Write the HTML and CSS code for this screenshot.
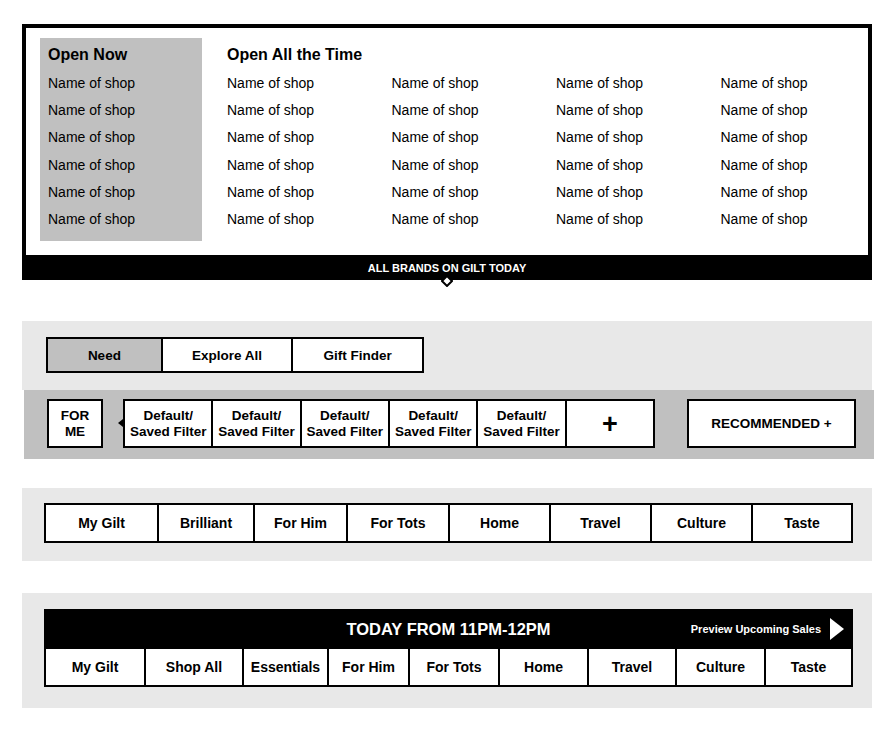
FILE: index.html
```html
<!DOCTYPE html>
<html lang="en">
  <head>
    <meta charset="UTF-8" />
    <meta name="viewport" content="width=device-width, initial-scale=1.0" />
    <title>Gilt Navigation</title>
    <link rel="stylesheet" href="styles.css">
  </head>
  <body>
    <div class="page">
      <!-- Brands dropdown -->
      <div class="brands">
        <div class="brands-body">
          <div class="open-now">
            <h2 class="list-title">Open Now</h2>
            <ul class="shop-list">
              <li>Name of shop</li>
              <li>Name of shop</li>
              <li>Name of shop</li>
              <li>Name of shop</li>
              <li>Name of shop</li>
              <li>Name of shop</li>
            </ul>
          </div>
          <div class="open-always">
            <h2 class="list-title">Open All the Time</h2>
            <ul class="shop-grid">
              <li>Name of shop</li><li>Name of shop</li><li>Name of shop</li><li>Name of shop</li>
              <li>Name of shop</li><li>Name of shop</li><li>Name of shop</li><li>Name of shop</li>
              <li>Name of shop</li><li>Name of shop</li><li>Name of shop</li><li>Name of shop</li>
              <li>Name of shop</li><li>Name of shop</li><li>Name of shop</li><li>Name of shop</li>
              <li>Name of shop</li><li>Name of shop</li><li>Name of shop</li><li>Name of shop</li>
              <li>Name of shop</li><li>Name of shop</li><li>Name of shop</li><li>Name of shop</li>
            </ul>
          </div>
        </div>
        <div class="brands-bar">
          ALL BRANDS ON GILT TODAY
          <svg class="bar-pointer" width="12" height="12" viewBox="0 0 12 12">
            <polygon points="6,1 11,6 6,11 1,6" fill="#fff" stroke="#000" stroke-width="2" />
          </svg>
        </div>
      </div>

      <!-- Need / Explore / Gift Finder -->
      <div class="panel panel-tabs">
        <div class="tabs">
          <div class="tab active">Need</div>
          <div class="tab">Explore All</div>
          <div class="tab">Gift Finder</div>
        </div>
      </div>
      <div class="filter-band">
        <div class="box for-me">FOR<br>ME</div>
        <div class="filters">
          <div class="filter">Default/<br>Saved Filter</div>
          <div class="filter">Default/<br>Saved Filter</div>
          <div class="filter">Default/<br>Saved Filter</div>
          <div class="filter">Default/<br>Saved Filter</div>
          <div class="filter">Default/<br>Saved Filter</div>
          <div class="filter plus">+</div>
        </div>
        <div class="box recommended">RECOMMENDED +</div>
      </div>

      <!-- Category nav -->
      <div class="panel panel-nav">
        <div class="nav nav-short">
          <div class="nav-item">My Gilt</div>
          <div class="nav-item">Brilliant</div>
          <div class="nav-item">For Him</div>
          <div class="nav-item">For Tots</div>
          <div class="nav-item">Home</div>
          <div class="nav-item">Travel</div>
          <div class="nav-item">Culture</div>
          <div class="nav-item">Taste</div>
        </div>
      </div>

      <!-- Today's sales nav -->
      <div class="panel panel-today">
        <div class="today-bar">
          <span></span>
          <span class="today-title">TODAY FROM 11PM-12PM</span>
          <a class="preview" href="#">
            Preview Upcoming Sales
            <svg width="14" height="22" viewBox="0 0 14 22">
              <polygon points="0,0 14,11 0,22" fill="#fff" />
            </svg>
          </a>
        </div>
        <div class="nav nav-long">
          <div class="nav-item">My Gilt</div>
          <div class="nav-item">Shop All</div>
          <div class="nav-item">Essentials</div>
          <div class="nav-item">For Him</div>
          <div class="nav-item">For Tots</div>
          <div class="nav-item">Home</div>
          <div class="nav-item">Travel</div>
          <div class="nav-item">Culture</div>
          <div class="nav-item">Taste</div>
        </div>
      </div>
    </div>
  </body>
</html>
```

FILE: styles.css
```css
body {
  margin: 0;
  padding: 0;
  background-color: #fff;
  font-family: "Liberation Sans", Arial, sans-serif;
  color: #000;
}

.page {
  width: 850px;
  padding: 24px 0 40px 22px;
}

/* brands dropdown */

.brands {
  border: 4px solid #000;
  border-bottom: 0;
}

.brands-body {
  display: flex;
  padding: 10px 0 14px 14px;
}

.list-title {
  margin: 0 0 2px;
  font-size: 16px;
  font-weight: bold;
  line-height: 26px;
}

.shop-list,
.shop-grid {
  list-style: none;
  margin: 0;
  padding: 0;
  font-size: 14px;
  line-height: 27.2px;
}

.open-now {
  flex-shrink: 0;
  width: 146px;
  padding: 4px 8px 8px;
  background-color: #c0c0c0;
}

.open-always {
  flex: 1;
  margin-left: 25px;
  padding-top: 4px;
}

.shop-grid {
  display: grid;
  grid-template-columns: repeat(3, 164.5px) 1fr;
}

.brands-bar {
  position: relative;
  height: 25px;
  background-color: #000;
  color: #fff;
  font-size: 11px;
  font-weight: bold;
  display: flex;
  justify-content: center;
  align-items: center;
}

.bar-pointer {
  position: absolute;
  left: 415px;
  bottom: -7px;
}

/* grey panels */

.panel {
  background-color: #e8e8e8;
}

.panel-tabs {
  margin-top: 41px;
  padding: 16px 24px 17px;
}

.tabs {
  display: flex;
  width: 378px;
  height: 36px;
  border: 2px solid #000;
  box-sizing: border-box;
}

.tab {
  display: flex;
  align-items: center;
  justify-content: center;
  font-size: 13.5px;
  font-weight: bold;
  background-color: #fff;
  border-left: 2px solid #000;
}

.tab:nth-child(1) {
  width: 114px;
  border-left: 0;
}

.tab:nth-child(2) {
  width: 130px;
}

.tab:nth-child(3) {
  width: 130px;
}

.tab.active {
  background-color: #c0c0c0;
}

/* filter band */

.filter-band {
  display: flex;
  margin: 0 -2px 0 2px;
  padding: 9px 0 11px 23px;
  background-color: #c0c0c0;
}

.box {
  height: 49px;
  box-sizing: border-box;
  border: 2px solid #000;
  background-color: #fff;
  display: flex;
  align-items: center;
  justify-content: center;
  text-align: center;
  font-size: 13.5px;
  font-weight: bold;
  line-height: 16px;
}

.for-me {
  width: 56px;
}

.filters {
  position: relative;
  display: flex;
  width: 532px;
  height: 49px;
  margin-left: 20px;
  box-sizing: border-box;
  border: 2px solid #000;
  background-color: #fff;
}

.filters::before {
  content: "";
  position: absolute;
  left: -7px;
  top: 18px;
  border-top: 4.5px solid transparent;
  border-bottom: 4.5px solid transparent;
  border-right: 5px solid #000;
}

.filter {
  flex: 1;
  display: flex;
  align-items: center;
  justify-content: center;
  text-align: center;
  font-size: 13.5px;
  font-weight: bold;
  line-height: 16px;
  border-left: 2px solid #000;
}

.filter:first-child {
  border-left: 0;
}

.filter.plus {
  font-size: 27px;
}

.recommended {
  width: 169px;
  margin-left: 32px;
}

/* nav rows */

.panel-nav {
  margin-top: 29px;
  padding: 15px 19px 18px 22px;
}

.nav {
  display: grid;
  border: 2px solid #000;
  background-color: #fff;
}

.nav-short {
  height: 40px;
  box-sizing: border-box;
  grid-template-columns: 111px 96px 93px 102px 101px 101px 101px 100px;
}

.nav-item {
  display: flex;
  align-items: center;
  justify-content: center;
  font-size: 14px;
  font-weight: bold;
  border-left: 2px solid #000;
}

.nav-item:first-child {
  border-left: 0;
}

.panel-today {
  margin-top: 32px;
  padding: 16px 19px 21px 22px;
}

.today-bar {
  display: grid;
  grid-template-columns: 1fr auto 1fr;
  align-items: center;
  height: 40px;
  padding: 0 9px;
  background-color: #000;
  color: #fff;
}

.today-title {
  font-size: 16.5px;
  font-weight: bold;
}

.preview {
  justify-self: end;
  display: flex;
  align-items: center;
  gap: 9px;
  color: #fff;
  text-decoration: none;
  font-size: 11px;
  font-weight: bold;
}

.nav-long {
  height: 38px;
  box-sizing: border-box;
  border-top: 0;
  grid-template-columns: 98px 98px 85px 81px 90px 89px 88px 89px 87px;
}
```
